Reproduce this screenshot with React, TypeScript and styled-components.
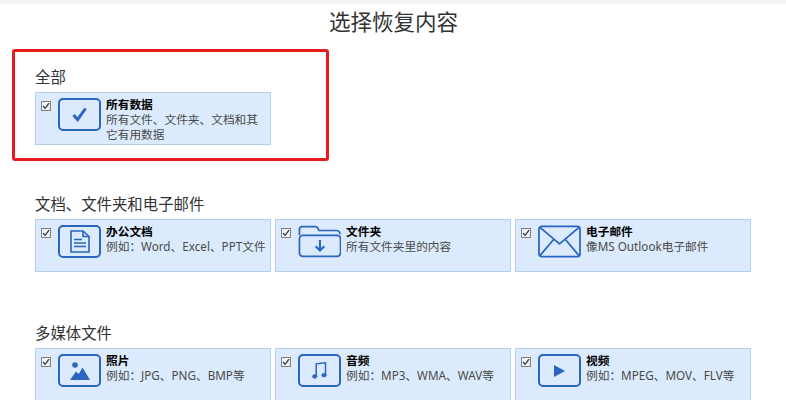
import React from 'react';
import styled, { createGlobalStyle } from 'styled-components';

const GlobalStyle = createGlobalStyle`
  html, body {
    margin: 0;
    height: 400px;
    overflow: hidden;
    background: #fff;
  }
  body {
    font-family: "Noto Sans", "Noto Sans CJK SC", sans-serif;
  }
`;

const Page = styled.div`
  width: 786px;
  height: 400px;
  overflow: hidden;
  border-top: 4px solid #f3f3f3;
  box-sizing: border-box;
`;

const Title = styled.h1`
  margin: 0;
  height: 45px;
  line-height: 35px;
  padding-left: 1px;
  text-align: center;
  font-size: 21.5px;
  font-weight: 400;
  color: #333;
`;

const Highlight = styled.div`
  width: 317px;
  height: 112px;
  box-sizing: border-box;
  margin: 0 0 33px 12px;
  padding: 15px 0 0 20px;
  border: 3px solid #e81c1f;
  border-radius: 3px;
`;

const Section = styled.section`
  margin: 0 0 51px 35px;
`;

const Label = styled.div`
  height: 20px;
  line-height: 22px;
  margin-bottom: 5px;
  font-size: 15.4px;
  color: #333;
`;

const Grid = styled.div`
  display: flex;
  gap: 4px;
`;

const Card = styled.div`
  width: 236px;
  height: 53px;
  box-sizing: border-box;
  display: flex;
  align-items: flex-start;
  padding: 5px 0 0 5px;
  background: #dbeafc;
  border: 1px solid #b3cfee;
`;

const Check = styled.span`
  flex: none;
  width: 10px;
  height: 10px;
  margin: 3px 7px 0 0;
  box-sizing: border-box;
  display: flex;
  align-items: center;
  justify-content: center;
  background: #eef3f8;
  border: 1px solid #808080;
`;

const IconSlot = styled.div<{ $framed?: boolean }>`
  flex: none;
  width: 43px;
  height: 33px;
  box-sizing: border-box;
  display: flex;
  align-items: center;
  justify-content: center;
  border: ${(p) => (p.$framed ? '2px solid #2b65c0' : 'none')};
  border-radius: 5px;
`;

const Text = styled.div`
  margin: -1px 0 0 5px;
  width: 165px;
  font-size: 11.7px;
  line-height: 15px;
  color: #4a4a4a;
  white-space: pre-line;
`;

const Name = styled.div`
  font-weight: 700;
  color: #000;
`;

const BLUE = '#2b65c0';

const icons: Record<string, React.ReactNode> = {
  check: (
    <svg width="15" height="15" viewBox="0 0 15 15">
      <path d="M1.5 8 L5.6 12.6 L13.5 1.5" fill="none" stroke={BLUE} strokeWidth="3" />
    </svg>
  ),
  doc: (
    <svg width="20" height="23" viewBox="0 0 20 23" fill="none" stroke={BLUE} strokeWidth="1.6">
      <path d="M1 1 H13 L19 6.5 V22 H1 Z" />
      <path d="M13 1 V6.5 H19" />
      <path d="M4 9.5 H12 M4 13 H16 M4 16.5 H16" strokeWidth="1.7" />
    </svg>
  ),
  folder: (
    <svg width="45" height="33" viewBox="0 0 45 33" fill="none" stroke={BLUE} strokeWidth="1.8">
      <path d="M1.5 10 V4 Q1.5 1 4.5 1 H18 Q20 1 21 3 L22 5 H40 Q44 5 44 9" />
      <rect x="1.5" y="10" width="43" height="22" rx="3.5" />
      <path d="M23 15 V26 M18.5 21.5 L23 26 L27.5 21.5" strokeWidth="2.2" />
    </svg>
  ),
  mail: (
    <svg width="44" height="33" viewBox="0 0 44 33" fill="none" stroke={BLUE} strokeWidth="1.8">
      <rect x="1" y="1" width="42" height="31" rx="3" />
      <path d="M2 2 L22 19 L42 2 M2 31 L16 14.5 M42 31 L28 14.5" />
    </svg>
  ),
  image: (
    <svg width="20" height="18" viewBox="0 0 20 18" fill={BLUE}>
      <circle cx="5" cy="3" r="2.8" />
      <path d="M0 18 L6 9.5 L8.8 12 L12.5 5.5 L20 18 Z" />
    </svg>
  ),
  music: (
    <svg width="15" height="17" viewBox="0 0 15 17" fill="none" stroke={BLUE} strokeWidth="1.5">
      <path d="M4.2 14 V1.8 L13.5 0.8 V12.8" />
      <ellipse cx="2.8" cy="14.4" rx="2.3" ry="1.9" fill={BLUE} strokeWidth="0.5" />
      <ellipse cx="12" cy="13.2" rx="2.3" ry="1.9" fill={BLUE} strokeWidth="0.5" />
    </svg>
  ),
  play: (
    <svg width="11" height="12" viewBox="0 0 11 12" fill={BLUE}>
      <path d="M0 0 L11 6 L0 12 Z" />
    </svg>
  ),
};

type Item = { icon: string; framed: boolean; name: string; desc: string };

const ALL: Item = {
  icon: 'check',
  framed: true,
  name: '所有数据',
  desc: '所有文件、文件夹、文档和其\n它有用数据',
};

const GROUPS: { label: string; items: Item[] }[] = [
  {
    label: '文档、文件夹和电子邮件',
    items: [
      { icon: 'doc', framed: true, name: '办公文档', desc: '例如：Word、Excel、PPT文件' },
      { icon: 'folder', framed: false, name: '文件夹', desc: '所有文件夹里的内容' },
      { icon: 'mail', framed: false, name: '电子邮件', desc: '像MS Outlook电子邮件' },
    ],
  },
  {
    label: '多媒体文件',
    items: [
      { icon: 'image', framed: true, name: '照片', desc: '例如：JPG、PNG、BMP等' },
      { icon: 'music', framed: true, name: '音频', desc: '例如：MP3、WMA、WAV等' },
      { icon: 'play', framed: true, name: '视频', desc: '例如：MPEG、MOV、FLV等' },
    ],
  },
];

const DataCard: React.FC<{ item: Item }> = ({ item }) => (
  <Card>
    <Check>
      <svg width="8" height="8" viewBox="0 0 8 8">
        <path d="M1 4 L3.2 6.4 L7 1.2" fill="none" stroke="#333" strokeWidth="1.2" />
      </svg>
    </Check>
    <IconSlot $framed={item.framed}>{icons[item.icon]}</IconSlot>
    <Text>
      <Name>{item.name}</Name>
      {item.desc}
    </Text>
  </Card>
);

export default function App() {
  return (
    <Page>
      <GlobalStyle />
      <Title>选择恢复内容</Title>
      <Highlight>
        <Label>全部</Label>
        <DataCard item={ALL} />
      </Highlight>
      {GROUPS.map((group) => (
        <Section key={group.label}>
          <Label>{group.label}</Label>
          <Grid>
            {group.items.map((item) => (
              <DataCard key={item.name} item={item} />
            ))}
          </Grid>
        </Section>
      ))}
    </Page>
  );
}
